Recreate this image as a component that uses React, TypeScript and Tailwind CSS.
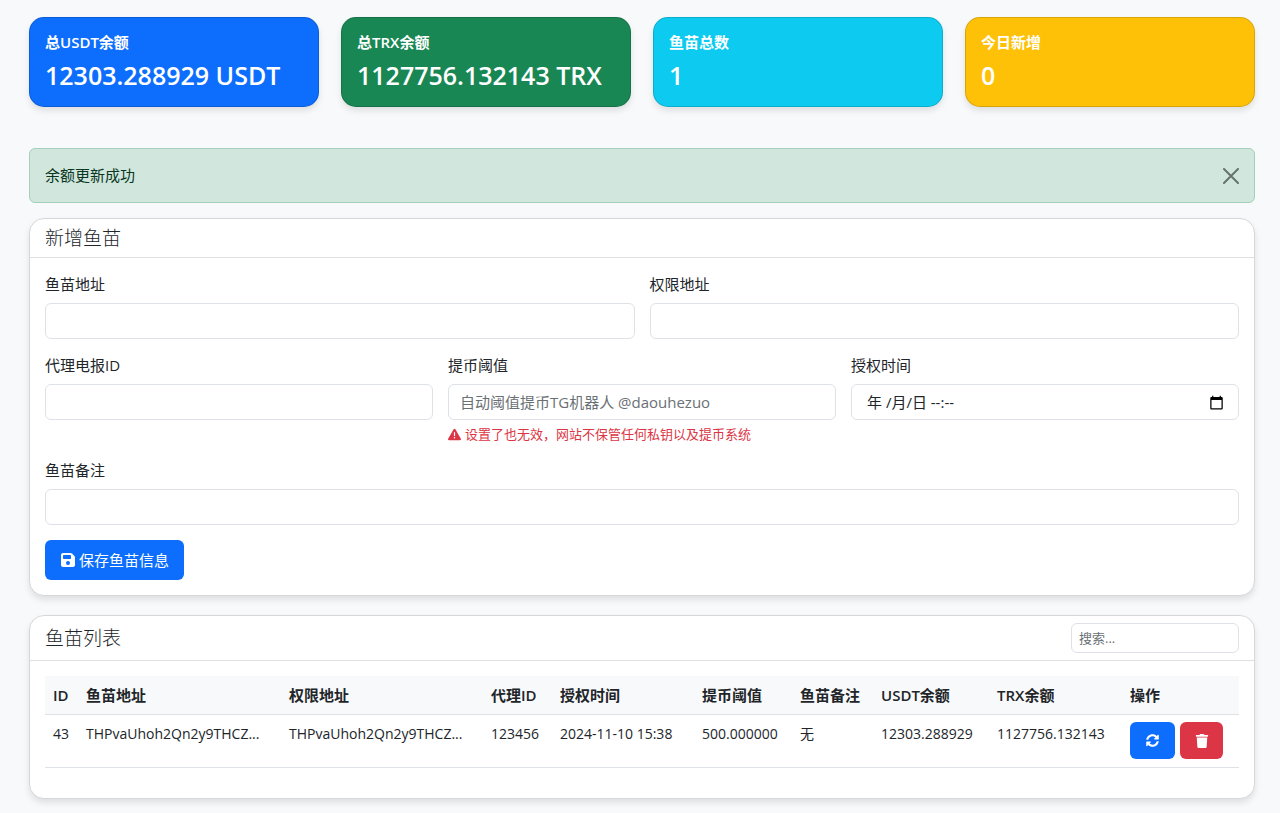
import { useState } from "react";
import type { ReactNode } from "react";
import { FaSyncAlt, FaTrash } from "react-icons/fa";
import { FaFloppyDisk, FaTriangleExclamation } from "react-icons/fa6";

const stats = [
  { label: "总USDT余额", value: "12303.288929 USDT", color: "bg-[#0d6efd]" },
  { label: "总TRX余额", value: "1127756.132143 TRX", color: "bg-[#198754]" },
  { label: "鱼苗总数", value: "1", color: "bg-[#0dcaf0]" },
  { label: "今日新增", value: "0", color: "bg-[#ffc107]" },
];

const columns = [
  { title: "ID", width: "w-[33px]" },
  { title: "鱼苗地址", width: "w-[203px]" },
  { title: "权限地址", width: "w-[202px]" },
  { title: "代理ID", width: "w-[69px]" },
  { title: "授权时间", width: "w-[142px]" },
  { title: "提币阈值", width: "w-[98px]" },
  { title: "鱼苗备注", width: "w-[81px]" },
  { title: "USDT余额", width: "w-[116px]" },
  { title: "TRX余额", width: "w-[133px]" },
  { title: "操作", width: "w-[117px]" },
];

const rows = [
  [
    "43",
    "THPvaUhoh2Qn2y9THCZ...",
    "THPvaUhoh2Qn2y9THCZ...",
    "123456",
    "2024-11-10 15:38",
    "500.000000",
    "无",
    "12303.288929",
    "1127756.132143",
  ],
];

const inputClass =
  "block h-9 w-full rounded-md border border-[#dee2e6] bg-white px-[11px] text-[15px] text-[#212529] outline-none placeholder:text-[#6b7075] focus:border-[#86b7fe]";

function Field({ id, label, children }: { id: string; label: string; children: ReactNode }) {
  return (
    <div>
      <label htmlFor={id} className="mb-[7px] block leading-[23px]">
        {label}
      </label>
      {children}
    </div>
  );
}

function Panel({ title, action, children }: { title: string; action?: ReactNode; children: ReactNode }) {
  return (
    <section className="rounded-[15px] border border-[#d5d8db] bg-white shadow-[0_4px_6px_rgba(0,0,0,0.1)]">
      <header className="flex items-center justify-between border-b border-[#dee0e2] px-[15px] py-[7px]">
        <h5 className="text-[19px] leading-6 font-light">{title}</h5>
        {action}
      </header>
      {children}
    </section>
  );
}

export default function App() {
  const [alertOpen, setAlertOpen] = useState(true);
  return (
    <main className="min-h-screen bg-[#f8f9fb] pt-[17px] pr-[25px] pb-3.5 pl-[29px] font-['Open_Sans','Noto_Sans_CJK_SC',sans-serif] text-[15px] text-[#212529]">
      <div className="mb-[41px] grid grid-cols-4 gap-[22px]">
        {stats.map((s) => (
          <div
            key={s.label}
            className={`h-[90px] rounded-[15px] border border-black/15 px-[15px] pt-[15px] text-white shadow-[0_4px_6px_rgba(0,0,0,0.1)] ${s.color}`}
          >
            <h6 className="mb-[7px] text-[15px] leading-[18px] font-semibold">{s.label}</h6>
            <h3 className="text-[25px] leading-[34px] font-semibold whitespace-nowrap">{s.value}</h3>
          </div>
        ))}
      </div>

      {alertOpen && (
        <div
          role="alert"
          className="mb-[15px] flex h-[55px] items-center justify-between rounded-md border border-[#a3cfbb] bg-[#d1e7dd] px-[15px] text-[#0a3622]"
        >
          <span>余额更新成功</span>
          <button type="button" aria-label="关闭" onClick={() => setAlertOpen(false)}>
            <svg viewBox="0 0 16 16" className="size-4 opacity-50" fill="none" stroke="#000" strokeWidth="2" strokeLinecap="round">
              <path d="M1 1l14 14M15 1L1 15" />
            </svg>
          </button>
        </div>
      )}

      <div className="flex flex-col gap-[19px]">
        <Panel title="新增鱼苗">
          <form className="p-[15px]" onSubmit={(e) => e.preventDefault()}>
            <div className="mb-[15px] grid grid-cols-2 gap-[15px]">
              <Field id="address" label="鱼苗地址">
                <input id="address" type="text" className={inputClass} />
              </Field>
              <Field id="permission" label="权限地址">
                <input id="permission" type="text" className={inputClass} />
              </Field>
            </div>
            <div className="mb-[15px] grid grid-cols-3 gap-[15px]">
              <Field id="agent" label="代理电报ID">
                <input id="agent" type="text" className={inputClass} />
              </Field>
              <Field id="threshold" label="提币阈值">
                <input id="threshold" type="text" placeholder="自动阈值提币TG机器人 @daouhezuo" className={inputClass} />
                <p className="mt-1 flex items-center gap-1 text-[13px] leading-5 text-[#dc3545]">
                  <FaTriangleExclamation />
                  设置了也无效，网站不保管任何私钥以及提币系统
                </p>
              </Field>
              <Field id="time" label="授权时间">
                <div className="flex h-9 items-center rounded-md border border-[#dee2e6] bg-white pr-3.5 pl-[15px] focus-within:border-[#86b7fe]">
                  <input
                    id="time"
                    type="text"
                    placeholder="年 /月/日 --:--"
                    className="min-w-0 flex-1 text-[15px] outline-none placeholder:text-[#212529]"
                  />
                  <button type="button" aria-label="选择时间">
                    <svg viewBox="0 0 24 24" className="size-[15px]" fill="#000">
                      <path d="M20 3h-1V1h-2v2H7V1H5v2H4c-1.100 0-2 .9-2 2v16c0 1.100.9 2 2 2h16c1.100 0 2-.9 2-2V5c0-1.100-.9-2-2-2zm0 18H4V8h16v13z" />
                    </svg>
                  </button>
                </div>
              </Field>
            </div>
            <div className="mb-[15px]">
              <Field id="note" label="鱼苗备注">
                <input id="note" type="text" className={inputClass} />
              </Field>
            </div>
            <button type="submit" className="flex h-10 items-center gap-[3px] rounded-md bg-[#0d6efd] px-[15px] text-white">
              <FaFloppyDisk className="size-4" />
              保存鱼苗信息
            </button>
          </form>
        </Panel>

        <Panel
          title="鱼苗列表"
          action={
            <input
              type="search"
              aria-label="搜索"
              placeholder="搜索..."
              className="h-[30px] w-[168px] rounded-md border border-[#dee2e6] px-[7px] text-[13px] outline-none placeholder:text-[#6b7075] focus:border-[#86b7fe]"
            />
          }
        >
          <div className="px-[15px] pt-[15px] pb-[30px]">
            <table className="w-full table-fixed border-collapse text-left">
              <thead>
                <tr className="border-b border-[#dee2e6] bg-[#f8f9fa]">
                  {columns.map((c) => (
                    <th key={c.title} className={`px-2 py-[7px] leading-6 font-semibold whitespace-nowrap ${c.width}`}>
                      {c.title}
                    </th>
                  ))}
                </tr>
              </thead>
              <tbody>
                {rows.map((row) => (
                  <tr key={row[0]} className="border-b border-[#dee2e6]">
                    {row.map((cell, i) => (
                      <td key={i} className="px-2 py-[7px] align-top text-sm leading-6 whitespace-nowrap">
                        {cell}
                      </td>
                    ))}
                    <td className="px-2 pt-[7px] pb-2">
                      <div className="flex gap-[5px] text-[13px] text-white">
                        <button type="button" aria-label="刷新" className="flex h-[37px] w-[45px] items-center justify-center rounded-md bg-[#0d6efd]">
                          <FaSyncAlt />
                        </button>
                        <button type="button" aria-label="删除" className="flex h-[37px] w-[43px] items-center justify-center rounded-md bg-[#dc3545]">
                          <FaTrash className="size-3.5" />
                        </button>
                      </div>
                    </td>
                  </tr>
                ))}
              </tbody>
            </table>
          </div>
        </Panel>
      </div>
    </main>
  );
}
